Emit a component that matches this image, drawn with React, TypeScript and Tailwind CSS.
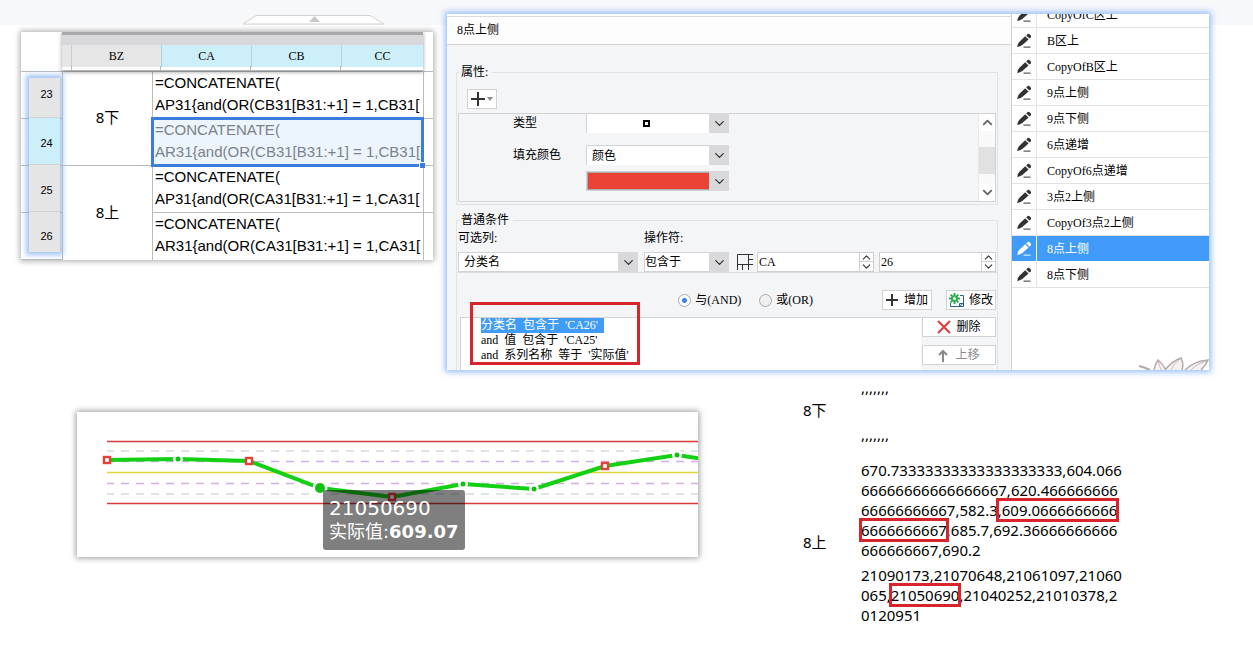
import type { ReactNode } from 'react';
import { ChevronDown, ChevronUp } from 'lucide-react';

const formulas = [
  { row: 23, text: 'AP31{and(OR(CB31[B31:+1] = 1,CB31[', group: '8下', pad: 'pb-1.5' },
  { row: 24, text: 'AR31{and(OR(CB31[B31:+1] = 1,CB31[', selected: true, pad: 'pt-1 bg-[#cdeffa]' },
  { row: 25, text: 'AP31{and(OR(CA31[B31:+1] = 1,CA31[', group: '8上', pad: 'pt-1' },
  { row: 26, text: 'AR31{and(OR(CA31[B31:+1] = 1,CA31[', pad: 'pt-2' },
];

const rules = [
  'CopyOfC区上',
  'B区上',
  'CopyOfB区上',
  '9点上侧',
  '9点下侧',
  '6点递增',
  'CopyOf6点递增',
  '3点2上侧',
  'CopyOf3点2上侧',
  '8点上侧',
  '8点下侧',
];
const activeRule = '8点上侧';

const conditions = [
  ['分类名', '包含于', "'CA26'"],
  ['and', '值', '包含于', "'CA25'"],
  ['and', '系列名称', '等于', "'实际值'"],
];

const points = [
  { x: 30, y: 48, kind: 'square' },
  { x: 101, y: 47, kind: 'dot' },
  { x: 172, y: 49, kind: 'square' },
  { x: 243, y: 76, kind: 'active' },
  { x: 315, y: 85, kind: 'square' },
  { x: 386, y: 72, kind: 'dot' },
  { x: 457, y: 77, kind: 'dot' },
  { x: 528, y: 54, kind: 'square' },
  { x: 600, y: 43, kind: 'dot' },
  { x: 640, y: 49, kind: 'dot' },
];

function PencilIcon() {
  return (
    <svg viewBox="0 0 16 16" className="h-4 w-4" fill="currentColor">
      <path d="M1.2 14 Q1.4 11 3.4 8.8 L9.2 3.2 L12.6 6.4 L6.6 11.8 Q4.4 13.6 1.2 14 Z" />
      <path d="M10.2 2.4 L11.6 1 Q12.6 .4 13.6 1.2 L14.8 2.4 Q15.4 3.4 14.8 4.2 L13.5 5.6 Z" />
      <path d="M7.5 13.6 H14.5 V14.6 H7.5 Z" />
    </svg>
  );
}

function Sheet() {
  return (
    <div className="mt-[7px] overflow-hidden bg-white shadow-[0_0_6px_1px_rgba(0,0,0,0.35)]">
      <div className="relative mr-[10px] ml-[41px] border-t-[3px] border-[#a9a9ab] bg-[#d9d9db] pt-[10px] shadow-[0_1px_4px_rgba(0,0,0,0.4)]">
        <div className="grid h-[20px] grid-cols-[10px_89fr_90fr_90fr_82fr] text-center font-['Liberation_Serif',serif] text-xs leading-[22px]">
          <span className="border-r border-[#ccc] bg-[#e6e6e6]" />
          <span className="bg-[#e6e6e6]">BZ</span>
          <span className="border-l border-[#b5d3dd] bg-[#cdeffa]">CA</span>
          <span className="border-l border-[#b5d3dd] bg-[#cdeffa]">CB</span>
          <span className="border-l border-[#b5d3dd] bg-[#cdeffa]">CC</span>
        </div>
        <div className="grid h-[6px] grid-cols-[10px_89fr_90fr_90fr_82fr] divide-x divide-[#bbb] border-y border-[#b5b5b5] bg-white">
          <span />
          <span />
          <span />
          <span />
          <span />
        </div>
      </div>
      <div className="flex">
        <div className="w-[41px] shrink-0 bg-[repeating-linear-gradient(#b9bcbf_0_1px,#fff_1px_47px)] pt-[7px] pr-[2px] pb-[8px] pl-[8px]">
          <div className="grid h-full grid-rows-[40fr_47fr_47fr_39fr] divide-y divide-[#d2d2d2] bg-[#e5e5e5] shadow-[0_0_5px_3px_rgba(120,170,240,0.7)]">
            {formulas.map((f) => (
              <span
                key={f.row}
                className={`flex items-center justify-center pl-1 font-['Liberation_Sans',sans-serif] text-[11px] ${f.pad}`}
              >
                {f.row}
              </span>
            ))}
          </div>
        </div>
        <table className="min-w-0 flex-1 table-fixed border-collapse">
          <colgroup>
            <col className="w-[90px]" />
            <col />
            <col className="w-[10px]" />
          </colgroup>
          <tbody>
            {formulas.map((f) => (
              <tr key={f.row} className="h-[47px]">
                {f.group && (
                  <td rowSpan={2} className="border-t border-l border-[#b9bcbf] pb-[2px] text-center text-[15px]">
                    {f.group}
                  </td>
                )}
                <td className="relative border-t border-l border-[#b9bcbf] p-0 pl-[2px] align-top font-['Liberation_Sans',sans-serif] text-[15px] leading-[22px] whitespace-nowrap">
                  {f.selected && (
                    <span className="absolute -top-[2px] -right-px -bottom-[2px] -left-[2px] border-[3px] border-[#3b7ddd] bg-[#ecf4fd]">
                      <i className="absolute -right-[4px] -bottom-[4px] h-[6px] w-[6px] border-t border-l border-white bg-[#3b7ddd]" />
                    </span>
                  )}
                  <span className={f.selected ? 'relative text-[#7b828b]' : 'relative'}>
                    =CONCATENATE(
                    <br />
                    {f.text}
                  </span>
                </td>
                <td className="border-t border-l border-[#b9bcbf]" />
              </tr>
            ))}
          </tbody>
        </table>
      </div>
    </div>
  );
}

type ComboProps = { label: string; value: string; tone?: string; children?: ReactNode };

function Combo({ label, value, tone = 'bg-white', children }: ComboProps) {
  return (
    <div className="relative h-[20px] w-full border border-[#d3d3d5] bg-white">
      <select aria-label={label} className={`h-full w-full appearance-none px-[5px] leading-[18px] outline-none ${tone}`}>
        <option>{value}</option>
      </select>
      {children}
      <span className="pointer-events-none absolute -top-px -right-px flex h-[20px] w-[20px] items-center justify-center bg-[#d9d9db]">
        <ChevronDown size={15} strokeWidth={2} color="#333" />
      </span>
    </div>
  );
}

function Spinner({ label, value }: { label: string; value: string }) {
  return (
    <div className="flex h-[20px] w-[117px] border border-[#cfcfd1] bg-white">
      <input aria-label={label} defaultValue={value} className="min-w-0 flex-1 px-px outline-none" />
      <div className="flex w-[14px] flex-col divide-y divide-[#d0d0d0] border-l border-[#d0d0d0]">
        <button aria-label={`${label} +`} className="flex h-[9px] items-center justify-center">
          <ChevronUp size={13} color="#333" />
        </button>
        <button aria-label={`${label} -`} className="flex h-[9px] items-center justify-center">
          <ChevronDown size={13} color="#333" />
        </button>
      </div>
    </div>
  );
}

function PropertyFields() {
  return (
    <fieldset className="border border-[#e3e3e6] pb-[2px]">
      <legend className="ml-[3px] pr-1 pl-px leading-4">属性:</legend>
      <button aria-label="添加属性" className="mt-[9px] ml-[10px] flex h-[20px] w-[30px] items-center justify-center gap-[2px] border border-[#d3d3d5] bg-white">
        <svg width="14" height="14" viewBox="0 0 14 14" stroke="#333" strokeWidth="2">
          <path d="M7 0 V14 M0 7 H14" />
        </svg>
        <svg width="6" height="4" viewBox="0 0 6 4" fill="#888">
          <path d="M0 0 H6 L3 4 Z" />
        </svg>
      </button>
      <div className="mx-px mt-[4px] flex h-[89px] justify-between border border-[#d3d3d5]">
        <div className="-mt-px grid grid-cols-[73px_143px] content-start pl-[54px] leading-5">
          <span>类型</span>
          <Combo label="类型" value="">
            <i className="pointer-events-none absolute top-[6px] left-[56px] h-[7px] w-[7px] border-2 border-black" />
          </Combo>
          <span className="mt-[12px]">填充颜色</span>
          <div className="mt-[12px]">
            <Combo label="填充颜色" value="颜色" />
          </div>
          <div className="col-start-2 mt-[6px]">
            <Combo label="颜色值" value="" tone="bg-[#ea4335] border border-[#aaa]" />
          </div>
        </div>
        <div className="flex w-[17px] flex-col border-l border-[#e8e8e8] bg-[#f9f9f9]">
          <span className="flex h-[17px] items-center justify-center bg-white">
            <ChevronUp size={15} strokeWidth={3} color="#666" />
          </span>
          <span className="mt-[16px] h-[27px] bg-[#e1e1e1]" />
          <span className="mt-auto flex h-[17px] items-center justify-center bg-white">
            <ChevronDown size={15} strokeWidth={3} color="#666" />
          </span>
        </div>
      </div>
    </fieldset>
  );
}

function ConditionFields() {
  return (
    <fieldset className="mt-[7px] border border-b-0 border-[#e3e3e6]">
      <legend className="ml-[3px] pr-1 pl-px leading-4">普通条件</legend>
      <div className="mt-[2px] flex items-end border-b border-[#dcdce0] px-px">
        <div className="mr-[6px] flex-1">
          <div className="mb-[6px] leading-4">可选列:</div>
          <Combo label="可选列" value="分类名" />
        </div>
        <div className="mr-[8px] w-[85px]">
          <div className="mb-[6px] leading-4">操作符:</div>
          <Combo label="操作符" value="包含于" tone="bg-white !px-0" />
        </div>
        <svg width="16" height="20" viewBox="0 0 16 20" className="mr-[4px]" fill="none" stroke="#333">
          <path d="M16 2.5 H.5 V18 M.5 12.5 H16 M5.5 12.5 V18 M11.5 2.5 V18 M11.5 7.5 H16" />
        </svg>
        <div className="mr-[5px]">
          <Spinner label="列" value="CA" />
        </div>
        <Spinner label="行" value="26" />
      </div>
      <div className="mt-[17px] flex items-center justify-end px-px">
        <label className="mr-[18px] flex items-center gap-[4px]">
          <input
            type="radio"
            name="join"
            defaultChecked
            className="h-[13px] w-[13px] appearance-none rounded-full border border-[#aaa] bg-[radial-gradient(circle,#3b82e0_0_2px,#fff_3px)]"
          />
          与(AND)
        </label>
        <label className="mr-[69px] flex items-center gap-[4px]">
          <input type="radio" name="join" className="h-[13px] w-[13px] appearance-none rounded-full border border-[#aaa] bg-[#f0f0f0]" />
          或(OR)
        </label>
        <button className="mr-[14px] flex h-[20px] w-[50px] items-center justify-center gap-[6px] border border-[#d3d3d5] bg-white whitespace-nowrap">
          <svg width="12" height="12" viewBox="0 0 12 12" stroke="#333" strokeWidth="2">
            <path d="M6 0 V12 M0 6 H12" />
          </svg>
          增加
        </button>
        <button className="flex h-[20px] w-[50px] items-center justify-center gap-[4px] border border-[#d3d3d5] bg-white whitespace-nowrap">
          <svg width="16" height="15" viewBox="0 0 16 15" fill="none">
            <path d="M11 2.5 H14.5 V13.5 H1.5 V10" stroke="#2d6086" />
            <path d="M10.5 13.5 V10.5 H14.5 M10.5 13.5 L14.5 10" stroke="#2d6086" />
            <circle cx="5.5" cy="5.5" r="2.6" stroke="#2fae4e" strokeWidth="2" />
            <path
              d="M5.5 0 V2 M5.5 9 V11 M0 5.5 H2 M9 5.5 H11 M1.6 1.6 L3 3 M8 8 L9.4 9.4 M1.6 9.4 L3 8 M8 3 L9.4 1.6"
              stroke="#2fae4e"
              strokeWidth="2"
            />
          </svg>
          修改
        </button>
      </div>
      <div className="mt-[7px] ml-[3px] flex h-[53px] gap-px overflow-hidden">
        <div className="flex-1 border-t border-l border-[#d3d3d5] bg-white pl-[20px] leading-[15px]">
          {conditions.map((parts, i) => (
            <div key={i} className={i === 0 ? 'flex w-[123px] gap-[6px] bg-[#419bf9] text-white' : 'flex gap-[6px]'}>
              {parts.map((part) => (
                <span key={part}>{part}</span>
              ))}
            </div>
          ))}
        </div>
        <div className="mr-px w-[74px] space-y-[8px]">
          <button className="flex h-[20px] w-full items-center justify-center gap-[5px] border border-[#d3d3d5] bg-white">
            <svg width="14" height="14" viewBox="0 0 14 14" stroke="#e03a3e" strokeWidth="2">
              <path d="M1 1 L13 13 M13 1 L1 13" />
            </svg>
            删除
          </button>
          <button disabled className="flex h-[20px] w-full items-center justify-center gap-[7px] border border-[#d3d3d5] bg-white text-[#8c8c8c]">
            <svg width="10" height="13" viewBox="0 0 10 13" fill="none" stroke="#888" strokeWidth="2">
              <path d="M5 13 V2 M1 6 L5 2 L9 6" />
            </svg>
            上移
          </button>
        </div>
      </div>
    </fieldset>
  );
}

function RuleDialog() {
  return (
    <div className="flex bg-white font-['Liberation_Serif','Noto_Sans_CJK_SC',serif] text-xs shadow-[0_0_6px_2px_rgba(110,165,250,0.75)]">
      <div className="relative flex-1 bg-[#f4f5f7]">
        <div className="flex h-[31px] items-center border-b border-[#d3d3d5] bg-[#fdfdfd] px-[10px] pt-[2px] shadow-[inset_0_2px_#fff,inset_0_3px_#d8dbe0]">
          {activeRule}
        </div>
        <div className="pt-[19px] pr-[13px] pl-[9px]">
          <PropertyFields />
          <ConditionFields />
        </div>
        <span className="absolute bottom-[5px] left-[23px] h-[63px] w-[170px] border-[3px] border-[#d8242b]" />
      </div>
      <div className="relative w-[198px] overflow-hidden border-l border-[#cfcfd1] bg-white">
        <ul className="-mt-[12px]">
          {rules.map((rule) => (
            <li
              key={rule}
              className={
                rule === activeRule
                  ? 'flex h-[26px] items-center border-b border-white bg-[#419bf9] text-white'
                  : 'flex h-[26px] items-center border-b border-[#e3e3e3]'
              }
            >
              <span
                className={
                  rule === activeRule
                    ? 'flex h-full w-[25px] items-center justify-center border-r border-white'
                    : 'flex h-full w-[25px] items-center justify-center border-r border-[#e3e3e3] text-[#333]'
                }
              >
                <PencilIcon />
              </span>
              <span className="pl-[10px]">{rule}</span>
            </li>
          ))}
        </ul>
        <svg width="71" height="13" viewBox="0 0 71 13" className="absolute right-0 bottom-0" fill="#f6f1f1" stroke="#b5a8ab">
          <path d="M1 9 Q6 10 12 13" strokeWidth="2" />
          <path d="M16 13 Q17 7 20 3 Q25 7 28 13" strokeWidth="1.5" />
          <path d="M27 13 Q34 4 43 1 Q46 7 44 13" strokeWidth="1.5" />
          <path d="M47 13 Q56 4 70 3 Q68 8 63 13" strokeWidth="1.5" />
          <path d="M20 4 L23 13 M42 2 Q36 6 33 13 M69 4 Q58 7 53 13" strokeWidth="0.7" fill="none" />
        </svg>
      </div>
    </div>
  );
}

function TrendChart() {
  return (
    <div className="relative mt-[35px] flex-1 self-start bg-white shadow-[0_0_6px_1px_rgba(0,0,0,0.4)]">
      <svg viewBox="0 0 621 145" className="block w-full" fill="none">
        <path d="M30 29.5 H621 M30 91.5 H621" stroke="#d93a3a" strokeWidth="1.3" />
        <path d="M30 60.5 H621" stroke="#dcd63c" strokeWidth="1.3" />
        <path d="M30 39 H621 M30 82 H621" stroke="#d3dbd6" strokeWidth="1.3" strokeDasharray="8 7" strokeDashoffset="1" />
        <path d="M30 49.5 H621 M30 71.5 H621" stroke="#d2afe2" strokeWidth="1.3" strokeDasharray="8 7" strokeDashoffset="1" />
        <polyline points={points.map((p) => `${p.x},${p.y}`).join(' ')} stroke="#14d014" strokeWidth="4" />
        {points.map((p) => {
          if (p.kind === 'square') {
            return <rect key={p.x} x={p.x - 3} y={p.y - 3} width="6" height="6" fill="#fff" stroke="#e5403a" strokeWidth="2.4" />;
          }
          const r = p.kind === 'active' ? 5 : 2.5;
          return (
            <g key={p.x}>
              <circle cx={p.x} cy={p.y} r={r + 2.5} fill="#fff" />
              <circle cx={p.x} cy={p.y} r={r} fill="#10c010" />
            </g>
          );
        })}
      </svg>
      <div className="absolute top-[78px] left-[246px] rounded-[3px] bg-black/50 px-[6px] pt-[6px] pb-[6px] font-['DejaVu_Sans','Noto_Sans_CJK_SC',sans-serif] whitespace-nowrap text-white">
        <div className="text-[20px] leading-[24px]">21050690</div>
        <div className="text-[18px] leading-[24px]">
          实际值:<b>609.07</b>
        </div>
      </div>
    </div>
  );
}

function Mark({ children }: { children: ReactNode }) {
  return <span className="outline-[3px] -outline-offset-1 outline-[#d8242b]">{children}</span>;
}

function Results() {
  return (
    <table className="w-[328px] self-start text-left text-[15px] leading-[20px]">
      <tbody>
        <tr>
          <th rowSpan={2} className="w-[58px] p-0 pb-[2px] font-normal">
            8下
          </th>
          <td className="pb-[27px]">,,,,,,,</td>
        </tr>
        <tr>
          <td>,,,,,,,</td>
        </tr>
        <tr>
          <th rowSpan={2} className="p-0 pt-[14px] font-normal">
            8上
          </th>
          <td className="pt-[16px] pb-[5px] whitespace-nowrap">
            670.73333333333333333333,604.066
            <br />
            66666666666666667,620.466666666
            <br />
            66666666667,582.3<Mark>,609.0666666666</Mark>
            <br />
            <Mark>6666666667</Mark>,685.7,692.36666666666
            <br />
            666666667,690.2
          </td>
        </tr>
        <tr>
          <td className="whitespace-nowrap">
            21090173,21070648,21061097,21060
            <br />
            065,<Mark>21050690</Mark>,21040252,21010378,2
            <br />
            0120951
          </td>
        </tr>
      </tbody>
    </table>
  );
}

export default function App() {
  return (
    <main className="min-h-screen overflow-hidden bg-[linear-gradient(#f7f8fa_25px,#fff_25px)] pt-[14px] pr-[44px] pl-[21px] font-['Noto_Sans','Noto_Sans_CJK_SC',sans-serif] text-black">
      <div className="grid grid-cols-[412fr_762fr] items-start gap-[14px]">
        <div>
          <svg width="144" height="11" viewBox="0 0 144 11" className="ml-[221px]">
            <path d="M1 10 L14 1.5 H128 L142 10 Z" fill="#fff" stroke="#d2d2d2" />
            <path d="M67 8 L72.5 2 L78 8 Z" fill="#c8c8c8" />
          </svg>
          <Sheet />
        </div>
        <RuleDialog />
      </div>
      <div className="mt-[7px] flex gap-[105px] pr-[78px] pl-[56px]">
        <TrendChart />
        <Results />
      </div>
    </main>
  );
}
